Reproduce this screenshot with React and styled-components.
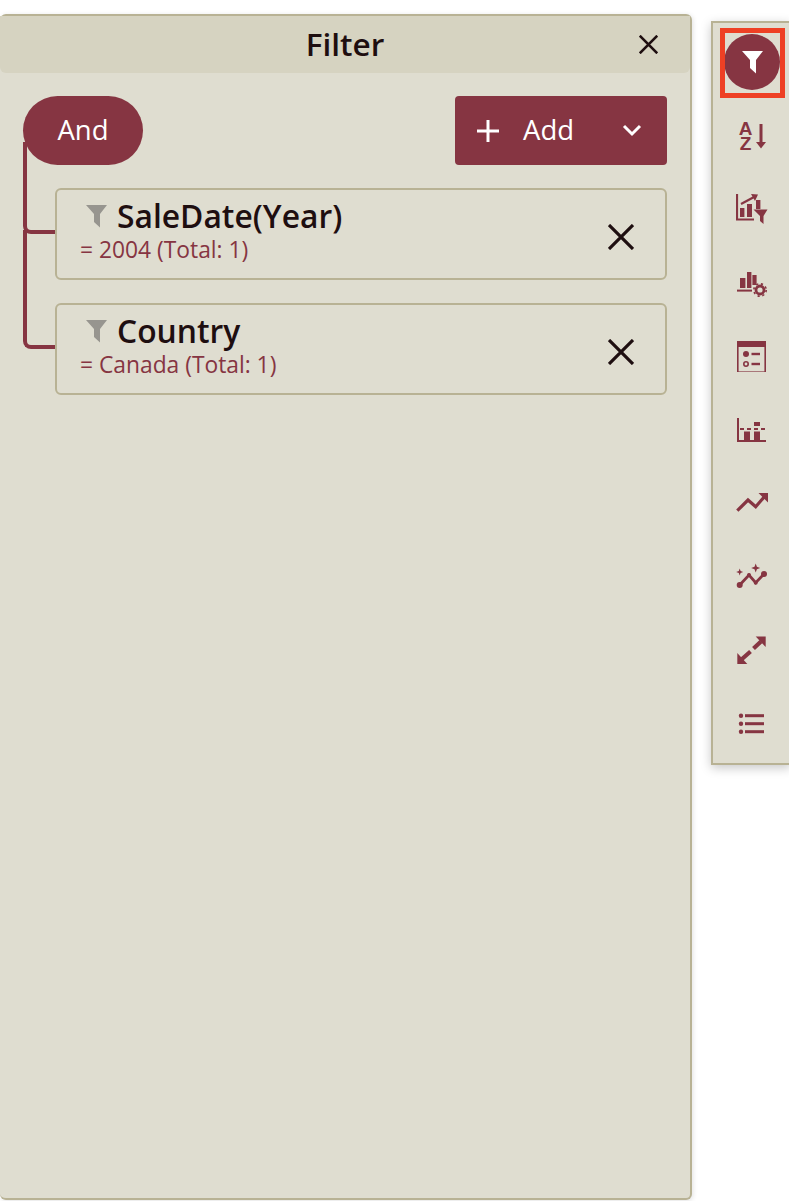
import React from "react";
import styled, { createGlobalStyle } from "styled-components";

const maroon = "#863542";
const ink = "#1e0e10";
const line = "#b8b294";
const paper = "#dfddd0";

const GlobalStyle = createGlobalStyle`
  html, body {
    margin: 0;
    padding: 0;
    background: #fff;
    font-family: "Open Sans", "Noto Sans", sans-serif;
    overflow: hidden;
  }
`;

const Page = styled.div`
  display: flex;
  align-items: flex-start;
  width: 789px;
  height: 1201px;
  padding-top: 14px;
  box-sizing: border-box;
  overflow: hidden;
`;

const Panel = styled.section`
  flex: 0 0 692px;
  height: 1186px;
  box-sizing: border-box;
  background: ${paper};
  border: 2px solid ${line};
  border-left: 0;
  border-radius: 6px;
  box-shadow: 1px 1px 5px rgba(0, 0, 0, 0.12);
`;

const PanelHeader = styled.header`
  display: flex;
  align-items: center;
  justify-content: center;
  position: relative;
  height: 57px;
  background: #d6d3c1;
  border-radius: 0 0 6px 6px;
`;

const PanelTitle = styled.h2`
  margin: -2px 0 0;
  font-size: 31.5px;
  font-weight: 600;
  color: ${ink};
`;

const CloseButton = styled.button`
  position: absolute;
  right: 32px;
  top: 19px;
  display: flex;
  padding: 0;
  border: 0;
  background: none;
  color: ${ink};
`;

const PanelBody = styled.div`
  padding: 23px 23px 0 23px;
`;

const Toolbar = styled.div`
  display: flex;
  justify-content: space-between;
  height: 69px;
`;

const AndPill = styled.button`
  width: 120px;
  height: 69px;
  padding: 0 0 3px;
  border: 0;
  border-radius: 35px;
  background: ${maroon};
  color: #fff;
  font: 400 27.5px "Open Sans", sans-serif;
`;

const AddGroup = styled.div`
  display: flex;
  width: 212px;
  height: 69px;
  border-radius: 4px;
  overflow: hidden;
  background: ${maroon};
  color: #fff;
`;

const AddButton = styled.button`
  display: flex;
  align-items: center;
  gap: 23px;
  flex: 1;
  padding: 0 0 0 21px;
  border: 0;
  background: none;
  color: inherit;
  font: 400 27.5px "Open Sans", sans-serif;
`;

const AddLabel = styled.span`
  margin-top: -3px;
`;

const DropButton = styled.button`
  display: flex;
  align-items: center;
  justify-content: center;
  width: 69px;
  padding: 0 2px 2px 0;
  border: 0;
  background: none;
  color: inherit;
`;

const FilterList = styled.div`
  display: flex;
  flex-direction: column;
  gap: 23px;
  margin: 23px 0 0 32px;
`;

const FilterCard = styled.div`
  position: relative;
  display: flex;
  align-items: center;
  justify-content: space-between;
  height: 92px;
  box-sizing: border-box;
  padding: 0 31px 0 23px;
  border: 2px solid ${line};
  border-radius: 6px;

  &::before {
    content: "";
    position: absolute;
    left: -34px;
    top: ${(p) => -p.$reach - 2}px;
    width: 32px;
    height: ${(p) => p.$reach + 46}px;
    box-sizing: border-box;
    border-left: 4px solid ${maroon};
    border-bottom: 4px solid ${maroon};
    border-bottom-left-radius: 8px;
  }
`;

const FilterText = styled.div`
  display: flex;
  flex-direction: column;
  margin-top: -9px;
`;

const FilterName = styled.div`
  display: flex;
  align-items: center;
  gap: 10px;
  padding-left: 6px;
  height: 40px;
  font-size: 31.8px;
  font-weight: 600;
  color: ${ink};
`;

const NameLabel = styled.span`
  margin-top: -2px;
`;

const FilterValue = styled.div`
  font-size: 22.8px;
  line-height: 27px;
  color: ${maroon};
`;

const RemoveButton = styled.button`
  display: flex;
  margin-top: 6px;
  padding: 0;
  border: 0;
  background: none;
  color: ${ink};
`;

const Rail = styled.nav`
  flex: 0 0 80px;
  margin: 7px 0 0 19px;
  height: 744px;
  box-sizing: border-box;
  padding-top: 3px;
  background: ${paper};
  border: 2px solid ${line};
  border-right: 0;
  box-shadow: 0 3px 10px rgba(0, 0, 0, 0.22);
`;

const RailItem = styled.button`
  display: flex;
  align-items: center;
  justify-content: center;
  position: relative;
  width: 78px;
  height: 73.4px;
  padding: 0;
  border: 0;
  background: none;
  color: ${maroon};
`;

const ActiveDot = styled.span`
  display: flex;
  align-items: center;
  justify-content: center;
  width: 56px;
  height: 56px;
  margin-bottom: 1px;
  border-radius: 50%;
  background: ${maroon};
  color: #fff;
`;

const Highlight = styled.span`
  position: absolute;
  left: 7px;
  top: 2px;
  width: 65px;
  height: 70px;
  box-sizing: border-box;
  border: 5px solid #ee4024;
`;

const SortGlyph = styled.span`
  display: flex;
  align-items: center;
  gap: 3px;
`;

const SortLetters = styled.span`
  display: flex;
  flex-direction: column;
  align-items: center;
  width: 14px;
  font-size: 19px;
  font-weight: 800;
  line-height: 15.5px;
`;

const Funnel = ({ color = "currentColor" }) => (
  <svg width="21" height="23" viewBox="0 0 21 23">
    <polygon points="0,0 21,0 14,9 14,22.5 8,17 8,9" fill={color} />
  </svg>
);

const Cross = ({ size, weight }) => (
  <svg width={size} height={size} viewBox="0 0 26 26">
    <path d="M1 1L25 25M25 1L1 25" stroke="currentColor" strokeWidth={weight} fill="none" />
  </svg>
);

const RailIcon = ({ children }) => (
  <svg width="32" height="32" viewBox="0 0 32 32" fill="currentColor">
    {children}
  </svg>
);

const SortIcon = () => (
  <SortGlyph>
    <SortLetters>
      <span>A</span>
      <span>Z</span>
    </SortLetters>
    <svg width="10" height="25" viewBox="0 0 10 25" fill="currentColor">
      <rect x="3.5" y="0" width="3" height="19" />
      <polygon points="0,18 10,18 5,24.5" />
    </svg>
  </SortGlyph>
);

const ChartFilterIcon = () => (
  <RailIcon>
    <path d="M1 1V26.5H18" stroke="currentColor" strokeWidth="2.2" fill="none" />
    <rect x="4" y="15" width="4.4" height="9" />
    <rect x="11" y="11" width="5" height="13" />
    <rect x="20" y="7" width="4.4" height="9" />
    <path d="M5 11L19 3.5" stroke="currentColor" strokeWidth="2.2" fill="none" />
    <polygon points="15,1 22,1.5 19,8" />
    <polygon points="17.5,16.5 31.5,16.5 27.5,23 27.5,31 24,28 24,23" />
  </RailIcon>
);

const ChartGearIcon = () => (
  <RailIcon>
    <rect x="4" y="11" width="5.4" height="10" />
    <rect x="11" y="5" width="4.4" height="16" />
    <rect x="16.4" y="8" width="4.2" height="10" />
    <rect x="1" y="22.6" width="15" height="2" />
    <circle cx="24" cy="23" r="4" fill="none" stroke="currentColor" strokeWidth="2.8" />
    <circle cx="24" cy="23" r="6.2" fill="none" stroke="currentColor" strokeWidth="1.6" strokeDasharray="2.2 2.7" />
  </RailIcon>
);

const FormIcon = () => (
  <RailIcon>
    <rect x="1.8" y="1.8" width="27.4" height="30.4" fill="none" stroke="currentColor" strokeWidth="1.6" />
    <rect x="1" y="1" width="29" height="6" />
    <circle cx="10" cy="14" r="3" />
    <rect x="15.5" y="12.8" width="8.5" height="2.4" />
    <circle cx="10" cy="24" r="2.2" fill="none" stroke="currentColor" strokeWidth="1.6" />
    <rect x="15.5" y="22.8" width="8.5" height="2.4" />
  </RailIcon>
);

const DashedBarsIcon = () => (
  <RailIcon>
    <rect x="1" y="4" width="2" height="23" />
    <rect x="1" y="26" width="29" height="2" />
    <rect x="8" y="17.5" width="6" height="9" />
    <rect x="18" y="17.5" width="6" height="9" />
    <rect x="18" y="8" width="6" height="4" />
    <path d="M4 15H29" stroke="currentColor" strokeWidth="1.8" strokeDasharray="4 3" />
  </RailIcon>
);

const TrendIcon = () => (
  <RailIcon>
    <path d="M1.3 23.7L12 13L19.7 19.7L29 9" stroke="currentColor" strokeWidth="3.2" fill="none" />
    <polygon points="22.5,6 32,6 32,15.5" />
  </RailIcon>
);

const SparkleTrendIcon = () => (
  <RailIcon>
    <path d="M3.7 25L13 15L19.7 22.7L28 14" stroke="currentColor" strokeWidth="2.8" fill="none" />
    <circle cx="3.7" cy="25" r="3" />
    <circle cx="13" cy="15" r="2" />
    <circle cx="19.7" cy="22.7" r="2" />
    <circle cx="28" cy="14" r="3" />
    <path d="M3.7 8.5L4.6 11.1L7.2 12L4.6 12.9L3.7 15.5L2.8 12.9L0.2 12L2.8 11.1Z" />
    <path d="M19.7 3.5L20.9 6.8L24.2 8L20.9 9.2L19.7 12.5L18.5 9.2L15.2 8L18.5 6.8Z" />
  </RailIcon>
);

const ExpandIcon = () => (
  <RailIcon>
    <polygon points="1.3,30 1.3,19 11.3,30" />
    <polygon points="29.7,2.6 19.7,2.6 29.7,13" />
    <path d="M6 25L14.5 17.5M17.5 14.5L25 7.5" stroke="currentColor" strokeWidth="4.2" fill="none" />
  </RailIcon>
);

const ListIcon = () => (
  <RailIcon>
    <circle cx="5" cy="8.7" r="2.2" />
    <circle cx="5" cy="16.7" r="2.2" />
    <circle cx="5" cy="24.7" r="2.2" />
    <rect x="9" y="7.2" width="19" height="3" />
    <rect x="9" y="15.2" width="19" height="3" />
    <rect x="9" y="23.2" width="19" height="3" />
  </RailIcon>
);

const filters = [
  { name: "SaleDate(Year)", value: "= 2004 (Total: 1)", reach: 46 },
  { name: "Country", value: "= Canada (Total: 1)", reach: 73 },
];

const railIcons = [
  SortIcon,
  ChartFilterIcon,
  ChartGearIcon,
  FormIcon,
  DashedBarsIcon,
  TrendIcon,
  SparkleTrendIcon,
  ExpandIcon,
  ListIcon,
];

export default function App() {
  return (
    <Page>
      <GlobalStyle />
      <Panel>
        <PanelHeader>
          <PanelTitle>Filter</PanelTitle>
          <CloseButton>
            <Cross size={19} weight={3.6} />
          </CloseButton>
        </PanelHeader>
        <PanelBody>
          <Toolbar>
            <AndPill>And</AndPill>
            <AddGroup>
              <AddButton>
                <svg width="24" height="24" viewBox="0 0 24 24">
                  <path d="M12 1V23M1 12H23" stroke="currentColor" strokeWidth="3" />
                </svg>
                <AddLabel>Add</AddLabel>
              </AddButton>
              <DropButton>
                <svg width="20" height="14" viewBox="0 0 20 14">
                  <path d="M2 3L10 11L18 3" stroke="currentColor" strokeWidth="3" fill="none" />
                </svg>
              </DropButton>
            </AddGroup>
          </Toolbar>
          <FilterList>
            {filters.map((f) => (
              <FilterCard key={f.name} $reach={f.reach}>
                <FilterText>
                  <FilterName>
                    <Funnel color="#97958f" />
                    <NameLabel>{f.name}</NameLabel>
                  </FilterName>
                  <FilterValue>{f.value}</FilterValue>
                </FilterText>
                <RemoveButton>
                  <Cross size={26} weight={3.2} />
                </RemoveButton>
              </FilterCard>
            ))}
          </FilterList>
        </PanelBody>
      </Panel>
      <Rail>
        <RailItem>
          <ActiveDot>
            <Funnel />
          </ActiveDot>
          <Highlight />
        </RailItem>
        {railIcons.map((Icon, i) => (
          <RailItem key={i}>
            <Icon />
          </RailItem>
        ))}
      </Rail>
    </Page>
  );
}
